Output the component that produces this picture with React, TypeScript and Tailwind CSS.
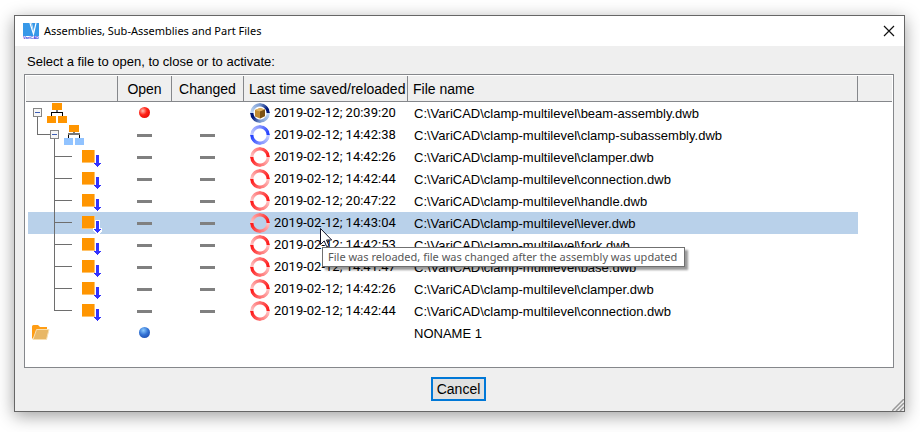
import type { ReactNode } from "react";

type RingKind = "box" | "blue" | "red";
type NodeKind = "root" | "sub" | "part" | "lastPart" | "folder";

interface FileRow {
    node: NodeKind;
    status: "red" | "blue" | "none";
    changed?: boolean;
    ring?: RingKind;
    saved?: string;
    name: string;
}

const DIR = "C:\\VariCAD\\clamp-multilevel\\";

const rows: FileRow[] = [
    { node: "root", status: "red", ring: "box", saved: "2019-02-12; 20:39:20", name: `${DIR}beam-assembly.dwb` },
    { node: "sub", status: "none", changed: false, ring: "blue", saved: "2019-02-12; 14:42:38", name: `${DIR}clamp-subassembly.dwb` },
    { node: "part", status: "none", changed: false, ring: "red", saved: "2019-02-12; 14:42:26", name: `${DIR}clamper.dwb` },
    { node: "part", status: "none", changed: false, ring: "red", saved: "2019-02-12; 14:42:44", name: `${DIR}connection.dwb` },
    { node: "part", status: "none", changed: false, ring: "red", saved: "2019-02-12; 20:47:22", name: `${DIR}handle.dwb` },
    { node: "part", status: "none", changed: false, ring: "red", saved: "2019-02-12; 14:43:04", name: `${DIR}lever.dwb` },
    { node: "part", status: "none", changed: false, ring: "red", saved: "2019-02-12; 14:42:53", name: `${DIR}fork.dwb` },
    { node: "part", status: "none", changed: false, ring: "red", saved: "2019-02-12; 14:41:47", name: `${DIR}base.dwb` },
    { node: "part", status: "none", changed: false, ring: "red", saved: "2019-02-12; 14:42:26", name: `${DIR}clamper.dwb` },
    { node: "lastPart", status: "none", changed: false, ring: "red", saved: "2019-02-12; 14:42:44", name: `${DIR}connection.dwb` },
    { node: "folder", status: "blue", name: "NONAME 1" },
];

const SELECTED = 5;

function Expander({ x }: { x: number }) {
    return (
        <g>
            <rect x={x + 0.5} y="6.5" width="8" height="8" rx="1" fill="#f6f6f6" stroke="#858585" />
            <path d={`M${x + 2} 10.5h5`} stroke="#3f5fb5" />
        </g>
    );
}

function AssemblyIcon({ x, leaf, bar }: { x: number; leaf: string; bar: string }) {
    return (
        <g transform={`translate(${x} 0)`}>
            <path d="M5 1h10v7H5z" fill="#ff9500" />
            <path d="M9 8h2v2H9z" fill="#777" />
            <path d="M4.5 14v-4M15.5 14v-4" stroke="#000" />
            <path d="M4 10h12" stroke={bar} strokeWidth={bar === "#000" ? 1 : 2} />
            <path d="M0 14h9v7H0zM11 14h9v7h-9z" fill={leaf} />
        </g>
    );
}

function TreeNode({ kind, selected }: { kind: NodeKind; selected: boolean }) {
    return (
        <svg width="80" height="22" viewBox="0 0 80 22" className="block" shapeRendering="crispEdges" fill="none" aria-hidden="true">
            {kind === "root" && (
                <>
                    <path d="M9.5 15v7" stroke="#6e6e6e" />
                    <Expander x={5} />
                    <AssemblyIcon x={19} leaf="#ff9500" bar="#000" />
                </>
            )}
            {kind === "sub" && (
                <>
                    <path d="M9.5 0v10.5H22M26.5 15v7" stroke="#6e6e6e" />
                    <Expander x={22} />
                    <AssemblyIcon x={36} leaf="#91c3ff" bar="#777" />
                </>
            )}
            {(kind === "part" || kind === "lastPart") && (
                <>
                    <path d={kind === "part" ? "M26.5 0v22M26 10.5h18" : "M26.5 0v10.5H44"} stroke="#6e6e6e" />
                    <path d="M54 4h13v13H54z" fill="#ffc36b" />
                    <path d="M54 4h12v12H54z" fill="#ff9500" />
                    {selected && <path d="M67 8h5v8h2v3l-3 3h-3l-3-3v-3h2z" fill="#fff" />}
                    <path d="M68 9h3v8h2v1h-1v1h-1v1h-1v1h-1v-1h-1v-1h-1v-1h-1v-1h2z" fill="#3333ff" />
                </>
            )}
            {kind === "folder" && (
                <g shapeRendering="auto">
                    <path d="M4 17V4.500Q4 3 5.500 3h4.500l2 2h7v10H6z" fill="#ff9d14" />
                    <path d="M8.500 7.500H21L18.500 17.500H5z" fill="#e8b765" stroke="#f8dfb0" strokeWidth="1" />
                </g>
            )}
        </svg>
    );
}

function Ring({ kind }: { kind: RingKind }) {
    const style = {
        box: "bg-[conic-gradient(from_0deg,#7797d0,#001878_60deg,#001878_90deg,#c3dcf8_92deg,#7797d0_180deg,#001878_240deg,#001878_270deg,#c3dcf8_272deg,#7797d0)]",
        blue: "bg-[conic-gradient(from_0deg,#8090ff,#2340ff_80deg,#2340ff_90deg,#c5ceff_92deg,#8090ff_180deg,#2340ff_260deg,#2340ff_270deg,#c5ceff_272deg,#8090ff)]",
        red: "bg-[conic-gradient(from_0deg,#ff7070,#ff1a1a_80deg,#ff1a1a_90deg,#ffc4c4_92deg,#ff7070_180deg,#ff1a1a_260deg,#ff1a1a_270deg,#ffc4c4_272deg,#ff7070)]",
    }[kind];

    return (
        <span className={`relative block size-5 shrink-0 rounded-full mask-[radial-gradient(circle,transparent_6px,black_7px)] ${style}`} />
    );
}

function BoxIcon() {
    return (
        <svg width="12" height="12" viewBox="0 0 12 12" className="absolute left-1 top-1" aria-hidden="true">
            <path d="M1 3l5-2 5 1.500v6.500l-5 2.500-5-2z" fill="#c08a30" />
            <path d="M1 3l5-2 5 1.500-5 2z" fill="#e0b260" />
            <path d="M6 4.500l5-2v6.500l-5 2.500z" fill="#7c5212" />
        </svg>
    );
}

function Ball({ color }: { color: "red" | "blue" }) {
    const fill = color === "red"
        ? "bg-[radial-gradient(circle_at_35%_35%,#ffc0b4,#ff2418_40%,#d80000)]"
        : "bg-[radial-gradient(circle_at_40%_30%,#8ccbff,#3272d4_45%,#173ea0)]";
    return <span className={`mx-auto mb-px block size-[11px] rounded-full ${fill}`} />;
}

function Dash() {
    return <span className="mx-auto mt-px block h-[3px] w-[15px] bg-[#808080]" />;
}

function HeadCell({ children, className = "" }: { children?: ReactNode; className?: string }) {
    return (
        <th className={`h-[26px] whitespace-nowrap border-b border-r border-[#85878b] bg-[#efefef] p-0 text-[14px] font-normal ${className}`}>
            {children}
        </th>
    );
}

function Cursor() {
    return (
        <svg width="13" height="20" viewBox="0 0 13 20" className="absolute left-[76px] top-[15px] z-20" aria-hidden="true">
            <path d="M.5.500v16l3.700-3.600 2.500 5.800 2.300-1-2.500-5.700h5.200z" fill="#fff" stroke="#15152a" />
        </svg>
    );
}

export default function App() {
    return (
        <div className="min-h-screen bg-white pb-5 pl-[14px] pr-[15px] pt-[15px] font-['Liberation_Sans',Arial,sans-serif] text-[13px] leading-4 text-black">
            <main className="relative border border-[#666] bg-[#efefef] shadow-[0_4px_16px_rgba(0,0,0,0.38)]">
                <header className="flex h-[30px] items-center bg-white pl-2 pr-[9px]">
                    <svg width="16" height="16" viewBox="0 0 16 16" aria-hidden="true">
                        <path d="M0 0h16v13H0z" fill="#3798e8" />
                        <path d="M7 0l3.500 11L13 0" fill="none" stroke="#fff" strokeWidth="1.200" />
                        <path d="M8.500 0l2 8" stroke="#b9dcf8" />
                        <path d="M0 13h16v3H0z" fill="#fff" />
                        <text x="0" y="16" fontSize="4" fontWeight="700" fill="#3434e0">VariCAD</text>
                    </svg>
                    <h1 className="ml-[5px] font-['Noto_Sans','Segoe_UI',sans-serif] text-[11px]">
                        Assemblies, Sub-Assemblies and Part Files
                    </h1>
                    <button type="button" aria-label="Close" className="ml-auto p-0">
                        <svg width="12" height="12" viewBox="0 0 12 12" className="block">
                            <path d="M1 1l10 10M11 1L1 11" stroke="#111" strokeWidth="1.200" />
                        </svg>
                    </button>
                </header>

                <section className="pb-[10px] pl-[9px] pr-[10px] pt-2">
                    <p className="mb-1 ml-[3px]">Select a file to open, to close or to activate:</p>
                    <div className="min-h-[294px] border border-[#85878b] bg-white p-px">
                        <table className="w-full table-fixed border-separate border-spacing-0">
                            <colgroup>
                                <col className="w-[92px]" />
                                <col className="w-[54px]" />
                                <col className="w-[72px]" />
                                <col className="w-[164px]" />
                                <col />
                                <col className="w-[34px]" />
                            </colgroup>
                            <thead>
                                <tr>
                                    <HeadCell />
                                    <HeadCell>Open</HeadCell>
                                    <HeadCell>Changed</HeadCell>
                                    <HeadCell className="pl-[5px] text-left">Last time saved/reloaded</HeadCell>
                                    <HeadCell className="pl-[5px] text-left">File name</HeadCell>
                                    <HeadCell className="border-r-0" />
                                </tr>
                            </thead>
                            <tbody>
                                {rows.map((row, i) => {
                                    const selected = i === SELECTED;
                                    const bg = selected ? "bg-[#b9d1ea]" : "";
                                    return (
                                        <tr key={i} className="h-[22px]" aria-selected={selected}>
                                            <td className="p-0">
                                                <div className={`ml-[2px] h-[22px] ${bg}`}>
                                                    <TreeNode kind={row.node} selected={selected} />
                                                </div>
                                            </td>
                                            <td className={`p-0 pr-px align-middle ${bg}`}>
                                                {row.status === "none" ? <Dash /> : <Ball color={row.status} />}
                                            </td>
                                            <td className={`p-0 pr-px align-middle ${bg}`}>{row.changed === false && <Dash />}</td>
                                            <td className={`p-0 ${bg}`}>
                                                <div className="relative flex items-center gap-1 pl-[6px]">
                                                    {row.ring && (
                                                        <span className="relative">
                                                            <Ring kind={row.ring} />
                                                            {row.ring === "box" && <BoxIcon />}
                                                        </span>
                                                    )}
                                                    <span className="whitespace-nowrap font-['Roboto',sans-serif]">{row.saved}</span>
                                                    {selected && (
                                                        <>
                                                            <Cursor />
                                                            <div
                                                                role="tooltip"
                                                                className="absolute left-[78px] top-[34px] z-10 whitespace-nowrap border border-[#707070] bg-white py-px pl-[5px] pr-[7px] font-['Noto_Sans','Segoe_UI',sans-serif] text-[11px] text-[#575757] shadow-[3px_3px_2px_rgba(0,0,0,0.4)]"
                                                            >
                                                                File was reloaded, file was changed after the assembly was updated
                                                            </div>
                                                        </>
                                                    )}
                                                </div>
                                            </td>
                                            <td className={`whitespace-nowrap p-0 pl-[6px] pt-px ${bg}`}>{row.name}</td>
                                            <td className="p-0" />
                                        </tr>
                                    );
                                })}
                            </tbody>
                        </table>
                    </div>
                    <div className="mt-[9px] flex justify-center pr-px">
                        <button type="button" className="h-6 w-[55px] border-2 border-[#0078d7] bg-[#e1e1e1] text-[14px]">
                            Cancel
                        </button>
                    </div>
                </section>

                <svg width="12" height="12" viewBox="0 0 12 12" className="absolute bottom-0 right-0" aria-hidden="true">
                    <path d="M0 12L12 0M4 12l8-8M8 12l4-4" stroke="#999" strokeWidth="1.500" />
                </svg>
            </main>
        </div>
    );
}
